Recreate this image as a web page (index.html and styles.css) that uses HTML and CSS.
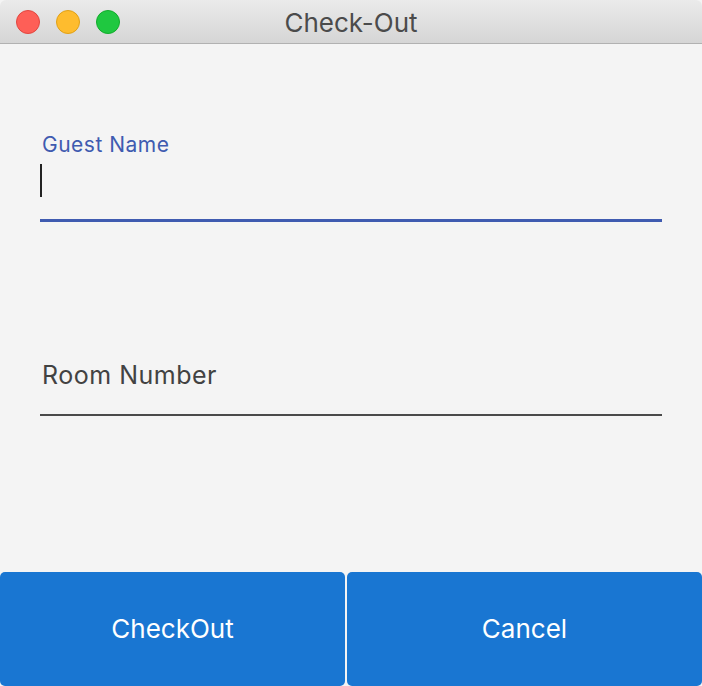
FILE: index.html
```html
<!DOCTYPE html>
<html>
<head>
<meta charset="utf-8">
<link rel="stylesheet" href="styles.css">
</head>
<body>
<div class="window">
  <div class="titlebar">
    <div class="lights">
      <span class="light red"></span>
      <span class="light yellow"></span>
      <span class="light green"></span>
    </div>
    <div class="title">Check-Out</div>
  </div>
  <div class="content">
    <div class="field focused">
      <div class="label">Guest Name</div>
      <div class="input"><span class="caret"></span></div>
    </div>
    <div class="field plain">
      <div class="label big">Room Number</div>
    </div>
  </div>
  <div class="buttons">
    <button class="btn primary">CheckOut</button>
    <button class="btn">Cancel</button>
  </div>
</div>
</body>
</html>
```
FILE: styles.css
```css
html, body {
  margin: 0;
  padding: 0;
  background: #f4f4f4;
}
.window {
  width: 702px;
  height: 686px;
  display: flex;
  flex-direction: column;
  font-family: Inter, "Liberation Sans", sans-serif;
  background: #f4f4f4;
  overflow: hidden;
}
.titlebar {
  height: 43px;
  border-bottom: 1px solid #b1b1b1;
  background: linear-gradient(#ebebeb, #d5d5d5);
  border-radius: 6px 6px 0 0;
  position: relative;
  display: flex;
  align-items: center;
  justify-content: center;
  flex-shrink: 0;
}
.lights {
  position: absolute;
  left: 16px;
  top: 10px;
  display: flex;
  gap: 16px;
}
.light {
  width: 24px;
  height: 24px;
  border-radius: 50%;
  box-sizing: border-box;
}
.red { background: #fe5f57; border: 1px solid #e2463f; }
.yellow { background: #febc2e; border: 1px solid #e1a116; }
.green { background: #1fc840; border: 1px solid #12ac2b; }
.title {
  font-size: 26px;
  color: #4b4b4b;
  padding-top: 1px;
}
.content {
  flex: 1;
  padding: 0 40px;
  display: flex;
  flex-direction: column;
}
.field.focused {
  margin-top: 89px;
  border-bottom: 3px solid #3f5bb0;
}
.label {
  font-size: 21px;
  letter-spacing: 0.5px;
  color: #3f5bb0;
  line-height: 24px;
  padding-left: 2px;
}
.input {
  height: 62px;
  padding-top: 7px;
  box-sizing: border-box;
}
.caret {
  display: block;
  width: 2px;
  height: 33px;
  background: #222;
}
.field.plain {
  margin-top: 126px;
  border-bottom: 2px solid #4a4a4a;
  height: 68px;
  box-sizing: border-box;
  padding-top: 12px;
}
.label.big {
  font-size: 25px;
  letter-spacing: 0.5px;
  color: #424242;
  line-height: 30px;
}
.buttons {
  display: flex;
  gap: 2px;
  height: 114px;
  flex-shrink: 0;
}
.btn {
  flex: 1;
  border: none;
  border-radius: 5px;
  background: #1976d2;
  color: #fff;
  font-family: Inter, "Liberation Sans", sans-serif;
  font-size: 26px;
  padding: 0 0 2px;
}
.btn.primary {
  flex: 0 0 345px;
}
```
